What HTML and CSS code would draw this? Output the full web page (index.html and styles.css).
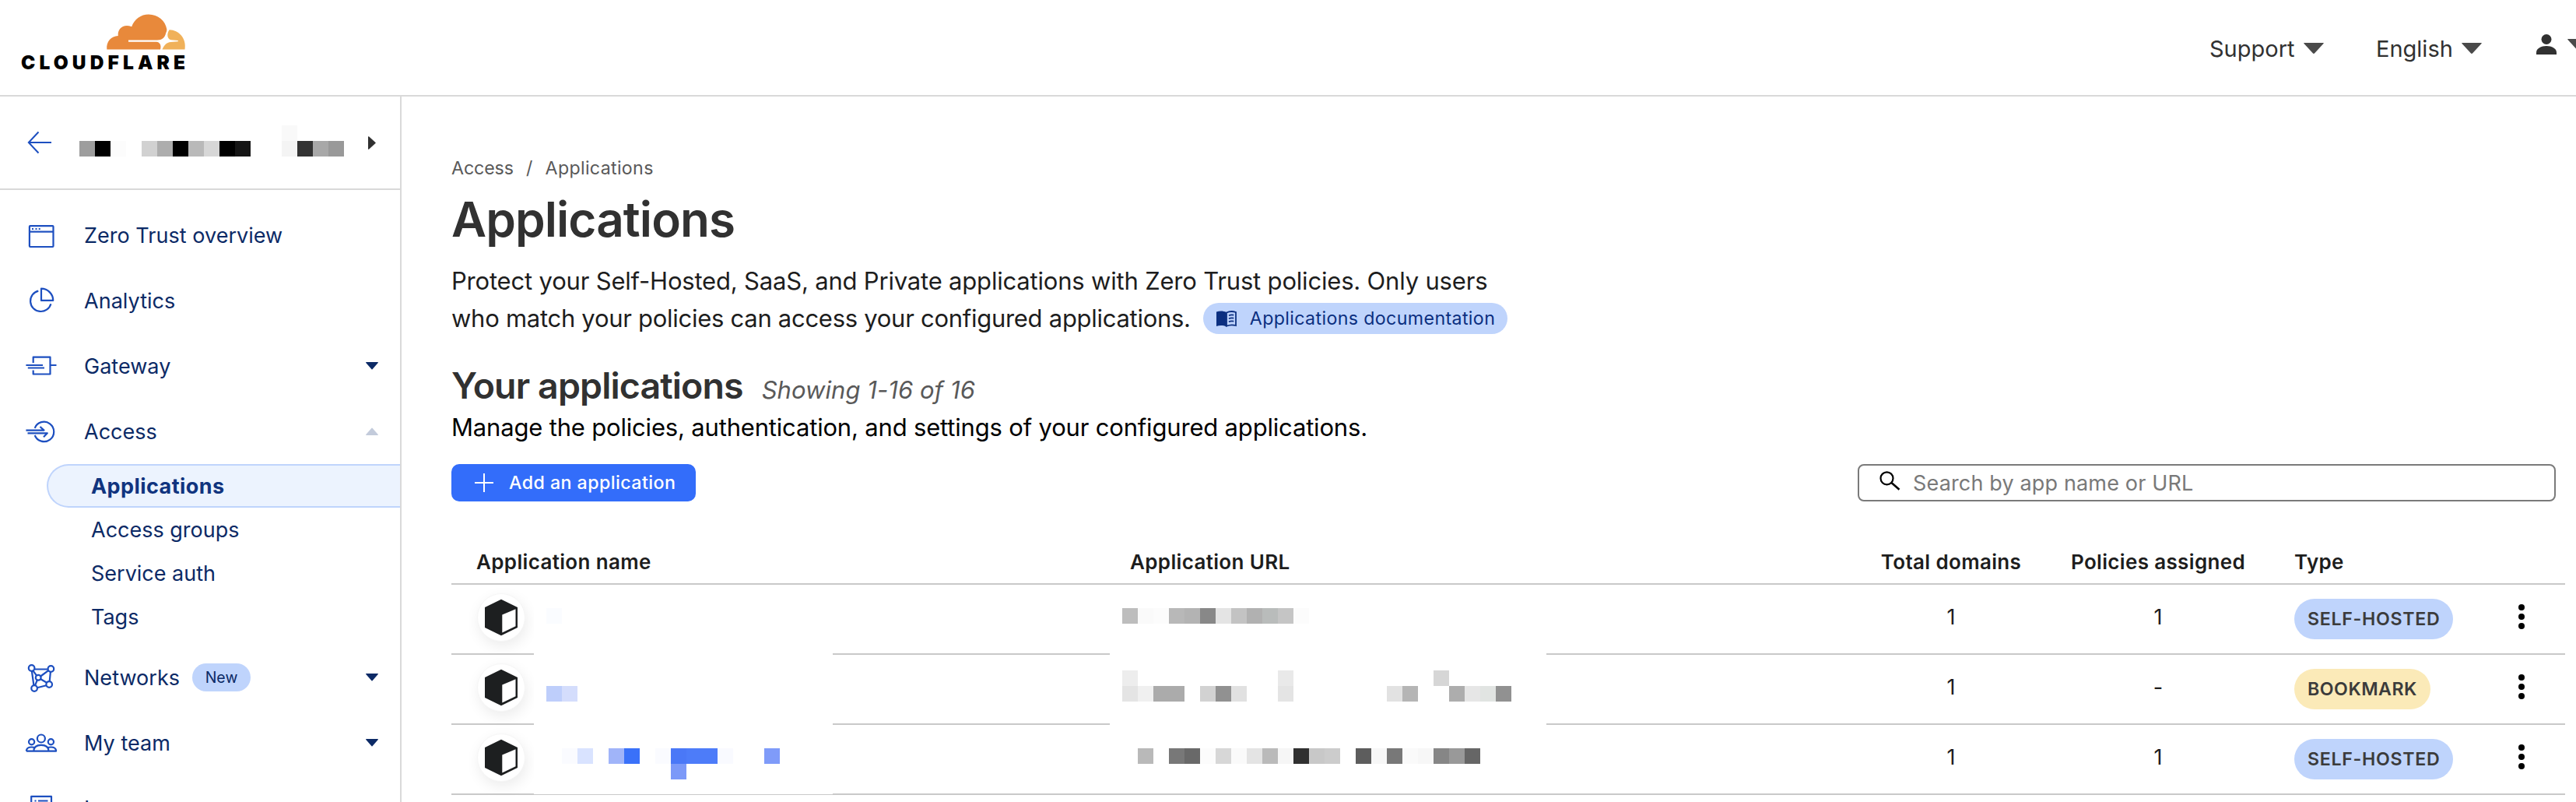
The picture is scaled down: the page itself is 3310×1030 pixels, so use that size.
FILE: index.html
```html
<!DOCTYPE html>
<html lang="en">
<head>
<meta charset="utf-8">
<title>Applications | Zero Trust</title>
<link rel="stylesheet" href="styles.css">
</head>
<body>
<header class="topbar">
  <div class="logo">
    <svg class="logo-cloud" width="104" height="46" viewBox="136 17.5 104 46">
      <path fill="#e8893b" d="M137.3 63C136.3 53 143 46 151.8 45.6C150.6 36 159 29.600 169.200 33.800C172.600 24 181 18 191 18C203 18 212.700 26.500 214.300 37C214.600 39 213.500 41 213 42.500C212 47.500 208 51 202 51H165V53.200H201C205 53.500 207.700 57 206 63Z"/>
      <path fill="#f0b15a" d="M217.600 37.700C229.500 38 240 48.500 237.500 63H208.500C210.500 58 214 53.800 219.500 53.500L228.800 52.800V51.600L220 50.800C214.500 49.500 214 43 217.600 37.700Z"/>
    </svg>
    <span class="logo-word">CLOUDFLARE</span>
  </div>
  <nav class="topnav">
    <a class="topnav-item">Support<svg class="drop" width="26" height="14" viewBox="0 0 26 14"><path d="M1 0H25Q26.500 0 25.500 1L14.200 13.300Q13 14.500 11.800 13.300L.5 1Q-.5 0 1 0Z"/></svg></a>
    <a class="topnav-item topnav-lang">English<svg class="drop" width="26" height="14" viewBox="0 0 26 14"><path d="M1 0H25Q26.500 0 25.500 1L14.200 13.300Q13 14.500 11.800 13.300L.5 1Q-.5 0 1 0Z"/></svg></a>
    <a class="topnav-user"><svg width="26" height="26" viewBox="0 0 26 26"><circle cx="13" cy="6.500" r="6.500"/><path d="M0 26V23.500C0 18 6.500 15 13 15S26 18 26 23.500V26Z"/></svg><svg class="drop" width="26" height="14" viewBox="0 0 26 14"><path d="M1 0H25Q26.500 0 25.500 1L14.200 13.300Q13 14.500 11.800 13.300L.5 1Q-.5 0 1 0Z"/></svg></a>
  </nav>
</header>
<div class="layout">
  <aside class="sidebar">
    <div class="account">
      <svg class="back" width="32" height="30" viewBox="0 0 32 30"><path d="M31 15H2M14.500 1.500L1.800 15L14.500 28.500"/></svg>
      <svg class="account-name" width="340" height="40" viewBox="0 0 340 40" shape-rendering="crispEdges">
        <rect x="0" y="20" width="20" height="20" fill="#9d9d9d"/><rect x="20" y="20" width="20" height="20" fill="#000"/><rect x="40" y="20" width="20" height="20" fill="#fcfcfc"/>
        <rect x="80" y="20" width="20" height="20" fill="#d1d1d1"/><rect x="100" y="20" width="20" height="20" fill="#adadad"/><rect x="120" y="20" width="20" height="20" fill="#000"/><rect x="140" y="20" width="20" height="20" fill="#b9b9b9"/><rect x="160" y="20" width="20" height="20" fill="#d7d7d7"/><rect x="180" y="20" width="20" height="20" fill="#000"/><rect x="200" y="20" width="20" height="20" fill="#151515"/>
        <rect x="260" y="0" width="20" height="20" fill="#f9f9f9"/><rect x="260" y="20" width="20" height="20" fill="#f4f4f4"/><rect x="280" y="20" width="20" height="20" fill="#333"/><rect x="300" y="20" width="20" height="20" fill="#a8a8a8"/><rect x="320" y="20" width="20" height="20" fill="#999"/>
      </svg>
      <svg class="account-caret" width="10" height="17" viewBox="0 0 10 17"><path d="M0 .5Q0 0 1 .2L9.500 8Q10 8.500 9.500 9L1 16.800Q0 17 0 16.500Z"/></svg>
    </div>
    <nav class="menu">
      <a class="item"><svg class="icon" width="42" height="40" viewBox="0 0 42 40"><rect x="5.900" y="8.100" width="30.600" height="26.900" rx="1"/><path d="M6 15.600H36"/><path class="dots" d="M9 12h2M13.500 12h2M17.700 12h2"/></svg><span>Zero Trust overview</span></a>
      <a class="item"><svg class="icon" width="42" height="40" viewBox="0 0 42 40"><path d="M21 4.700A15.200 15.200 0 0 1 36.200 19.900H21ZM17.300 7.600A13.400 13.400 0 1 0 33.400 24.200"/></svg><span>Analytics</span></a>
      <a class="item"><svg class="icon" width="42" height="40" viewBox="0 0 42 40"><path d="M10.700 16V8.700H32.500V30.500H10.700V25.500M1.400 19H23M3.800 22.500H25M33 19H40.500"/></svg><span>Gateway</span><svg class="caret" width="16" height="10" viewBox="0 0 16 10"><path d="M.5 0H15.500Q16.300.3 15.500 1.200L8.500 9.300Q8 9.800 7.500 9.300L.5 1.200Q-.3.300.5 0Z"/></svg></a>
      <a class="item"><svg class="icon" width="42" height="40" viewBox="0 0 42 40"><path d="M12.700 15.800A12.700 12.700 0 1 1 12.700 25M1.400 18.600H24.500L19.500 14M3.500 22.300H28.800L24 27.300"/></svg><span>Access</span><svg class="caret caret-open" width="16" height="10" viewBox="0 0 16 10"><path d="M.5 0H15.500Q16.300.3 15.500 1.200L8.500 9.300Q8 9.800 7.500 9.300L.5 1.200Q-.3.300.5 0Z"/></svg></a>
      <div class="submenu">
        <a class="sub sub-active">Applications</a>
        <a class="sub">Access groups</a>
        <a class="sub">Service auth</a>
        <a class="sub">Tags</a>
      </div>
      <a class="item"><svg class="icon" width="42" height="40" viewBox="0 0 42 40"><path d="M12.700 9.500H29.200M32.900 13L31.700 25M27.600 30.200L15.800 33.200M8.900 12L11.400 30.200M10.500 11.400L15 17.600M20.200 18.500L30.200 11.200M20 22L28.500 27M15.800 23.500L13 30.300"/><circle cx="8.600" cy="8" r="3.800"/><circle cx="33.400" cy="9" r="3.800"/><circle cx="31.200" cy="29" r="3.800"/><circle cx="12.100" cy="34" r="3.800"/><circle cx="17.200" cy="20.300" r="3.400"/></svg><span>Networks</span><span class="new">New</span><svg class="caret" width="16" height="10" viewBox="0 0 16 10"><path d="M.5 0H15.500Q16.300.3 15.500 1.200L8.500 9.300Q8 9.800 7.500 9.300L.5 1.200Q-.3.300.5 0Z"/></svg></a>
      <a class="item"><svg class="icon" width="42" height="40" viewBox="0 0 42 40"><circle cx="20.900" cy="14.500" r="5"/><circle cx="8.600" cy="18.700" r="3.600"/><circle cx="33.400" cy="18.700" r="3.600"/><path d="M2 30.700H40V29.500C39.500 27 36.500 25.500 33.500 25.500C31.500 25.500 30 25.900 28.800 26.500M2 30.700V29.500C2.500 27 5.500 25.500 8.500 25.500C10.500 25.500 12 25.900 13.200 26.500M11.400 30.500C11.400 25.500 15 22.800 20.900 22.800S30.400 25.500 30.400 30.500"/></svg><span>My team</span><svg class="caret" width="16" height="10" viewBox="0 0 16 10"><path d="M.5 0H15.500Q16.300.3 15.500 1.200L8.500 9.300Q8 9.800 7.500 9.300L.5 1.200Q-.3.300.5 0Z"/></svg></a>
      <a class="item"><svg class="icon" width="42" height="40" viewBox="0 0 42 40"><path d="M8.200 36V4.800H34V36ZM17 10.500H29.500M17 17H29.500M12.500 10.500H14.500M12.500 17H14.500"/></svg><span>Logs</span></a>
    </nav>
  </aside>
  <main class="main">
    <div class="crumbs"><span class="crumb-first">Access</span><span class="slash">/</span><span class="crumb-last">Applications</span></div>
    <h1>Applications</h1>
    <p class="intro"><span class="line-one">Protect your Self-Hosted, SaaS, and Private applications with Zero Trust policies. Only users</span><span class="line-two"><span class="line-text">who match your policies can access your configured applications.</span><a class="doc"><svg width="26" height="21" viewBox="0 0 26 21"><path fill="#0b2f80" d="M0 1.500C4 0 9 0 12.700 2V20.500C9 18.600 4 18.600 0 20Z"/><path fill="none" stroke="#0b2f80" stroke-width="1.800" d="M13 2.500C17 .6 21 .6 25 2V19C21 18 17 18 13 19.800ZM16 6.200C18 5.200 20 5.200 22.300 5.600M16 10.200C18 9.200 20 9.200 22.300 9.600M16 14.200C18 13.200 20 13.200 22.300 13.600"/></svg>Applications documentation</a></span></p>
    <div class="heading"><h2>Your applications</h2><em>Showing 1-16 of 16</em></div>
    <p class="sub-intro">Manage the policies, authentication, and settings of your configured applications.</p>
    <div class="toolbar">
      <button class="add"><svg width="24" height="24" viewBox="0 0 24 24"><path stroke="#fff" stroke-width="2" d="M12 0V24M0 12H24"/></svg>Add an application</button>
      <div class="search"><svg width="27" height="25" viewBox="0 0 27 25"><circle cx="9.500" cy="9.300" r="8" fill="none" stroke="#000" stroke-width="2.200"/><path stroke="#000" stroke-width="2.600" d="M15.200 14.800L25.500 23.800"/></svg><span>Search by app name or URL</span></div>
    </div>
    <section class="table">
      <div class="row head"><span class="c-name">Application name</span><span>Application URL</span><span class="mid">Total domains</span><span class="mid">Policies assigned</span><span class="c-type">Type</span><span></span></div>
      <div class="row"><span class="c-name"><span class="avatar"><svg width="44" height="48" viewBox="0 0 44 48"><path fill="#1d1f20" d="M22 .8L43 11V37L22 47.200L1 37V11Z"/><path fill="#fff" d="M23.300 20.500L40.500 13.200V35.300L23.300 43.500Z"/></svg></span></span><span></span><span class="mid">1</span><span class="mid">1</span><span class="c-type"><b class="tag">SELF-HOSTED</b></span><span class="mid more"><i></i><i></i><i></i></span></div>
      <div class="row"><span class="c-name"><span class="avatar"><svg width="44" height="48" viewBox="0 0 44 48"><path fill="#1d1f20" d="M22 .8L43 11V37L22 47.200L1 37V11Z"/><path fill="#fff" d="M23.300 20.500L40.500 13.200V35.300L23.300 43.500Z"/></svg></span></span><span></span><span class="mid">1</span><span class="mid">-</span><span class="c-type"><b class="tag tag-bookmark">BOOKMARK</b></span><span class="mid more"><i></i><i></i><i></i></span></div>
      <div class="row"><span class="c-name"><span class="avatar"><svg width="44" height="48" viewBox="0 0 44 48"><path fill="#1d1f20" d="M22 .8L43 11V37L22 47.200L1 37V11Z"/><path fill="#fff" d="M23.300 20.500L40.500 13.200V35.300L23.300 43.500Z"/></svg></span></span><span></span><span class="mid">1</span><span class="mid">1</span><span class="c-type"><b class="tag">SELF-HOSTED</b></span><span class="mid more"><i></i><i></i><i></i></span></div>
      <svg class="mask mask-name" width="384" height="268" viewBox="686 752 384 268" shape-rendering="crispEdges">
        <rect x="686" y="752" width="384" height="268" fill="#fff"/>
        <rect x="702" y="781" width="20" height="20" fill="#fafcff"/>
        <rect x="702" y="881" width="20" height="20" fill="#becefb"/><rect x="722" y="881" width="20" height="20" fill="#d4ddfc"/>
        <rect x="722" y="961" width="20" height="20" fill="#fafbff"/><rect x="742" y="961" width="20" height="20" fill="#d9e3ff"/><rect x="782" y="961" width="20" height="20" fill="#a0b4f9"/><rect x="802" y="961" width="20" height="20" fill="#3a71f9"/><rect x="842" y="961" width="20" height="20" fill="#fafbff"/><rect x="862" y="961" width="20" height="20" fill="#4a78f7"/><rect x="882" y="961" width="40" height="20" fill="#4d7cf9"/><rect x="922" y="961" width="20" height="20" fill="#f9faff"/><rect x="982" y="961" width="20" height="20" fill="#7f9bf9"/>
        <rect x="862" y="981" width="20" height="20" fill="#7c99f8"/>
      </svg>
      <svg class="mask mask-url" width="561" height="267" viewBox="1426 752 561 267" shape-rendering="crispEdges">
        <rect x="1426" y="752" width="561" height="267" fill="#fff"/>
        <rect x="1442" y="781" width="20" height="20" fill="#bdbdbd"/><rect x="1462" y="781" width="20" height="20" fill="#fafafa"/><rect x="1482" y="781" width="20" height="20" fill="#fcfcfc"/><rect x="1502" y="781" width="20" height="20" fill="#b8b8b8"/><rect x="1522" y="781" width="20" height="20" fill="#b3b3b3"/><rect x="1542" y="781" width="20" height="20" fill="#888"/><rect x="1562" y="781" width="20" height="20" fill="#e4e4e4"/><rect x="1582" y="781" width="20" height="20" fill="#c3c3c3"/><rect x="1602" y="781" width="20" height="20" fill="#b1b1b1"/><rect x="1622" y="781" width="20" height="20" fill="#b9bcbb"/><rect x="1642" y="781" width="20" height="20" fill="#c5c5c5"/><rect x="1662" y="781" width="20" height="20" fill="#fcfcfc"/>
        <rect x="1442" y="861" width="20" height="20" fill="#ededed"/><rect x="1642" y="861" width="20" height="20" fill="#e9e9e9"/><rect x="1842" y="861" width="20" height="20" fill="#d6d6d6"/>
        <rect x="1442" y="881" width="20" height="20" fill="#e4e4e4"/><rect x="1462" y="881" width="20" height="20" fill="#f0f0f0"/><rect x="1482" y="881" width="40" height="20" fill="#ababab"/><rect x="1542" y="881" width="20" height="20" fill="#d2d2d2"/><rect x="1562" y="881" width="20" height="20" fill="#919191"/><rect x="1582" y="881" width="20" height="20" fill="#e1e1e1"/><rect x="1642" y="881" width="20" height="20" fill="#e4e4e4"/><rect x="1782" y="881" width="20" height="20" fill="#e2e2e2"/><rect x="1802" y="881" width="20" height="20" fill="#b5b5b5"/><rect x="1862" y="881" width="20" height="20" fill="#adadad"/><rect x="1882" y="881" width="20" height="20" fill="#e6e6e6"/><rect x="1902" y="881" width="20" height="20" fill="#e1e4e2"/><rect x="1922" y="881" width="20" height="20" fill="#919191"/>
        <rect x="1462" y="961" width="20" height="20" fill="#b9b9b9"/><rect x="1502" y="961" width="20" height="20" fill="#787878"/><rect x="1522" y="961" width="20" height="20" fill="#696969"/><rect x="1542" y="961" width="20" height="20" fill="#fcfcfc"/><rect x="1562" y="961" width="20" height="20" fill="#d7d7d7"/><rect x="1582" y="961" width="20" height="20" fill="#fafafa"/><rect x="1602" y="961" width="20" height="20" fill="#e4e4e4"/><rect x="1622" y="961" width="20" height="20" fill="#bababa"/><rect x="1642" y="961" width="20" height="20" fill="#f6f6f6"/><rect x="1662" y="961" width="20" height="20" fill="#303030"/><rect x="1682" y="961" width="20" height="20" fill="#c8c8c8"/><rect x="1702" y="961" width="20" height="20" fill="#ccc"/><rect x="1742" y="961" width="20" height="20" fill="#5d5d5d"/><rect x="1762" y="961" width="20" height="20" fill="#f7f7f7"/><rect x="1782" y="961" width="20" height="20" fill="#787878"/><rect x="1802" y="961" width="20" height="20" fill="#fafafa"/><rect x="1822" y="961" width="20" height="20" fill="#f7f7f7"/><rect x="1842" y="961" width="20" height="20" fill="#868686"/><rect x="1862" y="961" width="20" height="20" fill="#999"/><rect x="1882" y="961" width="20" height="20" fill="#666"/>
      </svg>
    </section>
  </main>
</div>
</body>
</html>
```
FILE: styles.css
```css
* { box-sizing: border-box; }
html, body { height: 100%; }
body {
  margin: 0;
  display: flex;
  flex-direction: column;
  overflow: hidden;
  background: #fff;
  color: #1d1d1d;
  font-family: Inter, "Liberation Sans", sans-serif;
  font-size: 27px;
}
svg { display: block; flex: none; }
p, h1, h2 { margin: 0; }

/* Top bar */
.topbar {
  flex: none;
  height: 124px;
  display: flex;
  justify-content: space-between;
  border-bottom: 2px solid #d9d9d9;
}
.logo {
  width: 212px;
  margin-left: 27px;
  padding-top: 17.5px;
  display: flex;
  flex-direction: column;
}
.logo-cloud { align-self: flex-end; margin-right: -1px; }
.logo-word {
  margin-top: 1px;
  color: #000;
  font-weight: 900;
  font-size: 24.5px;
  line-height: 31px;
  letter-spacing: 5.13px;
}
.topnav {
  width: 471px;
  height: 124px;
  display: flex;
  overflow: hidden;
  color: #313131;
  font-size: 29px;
  line-height: 125px;
}
.topnav-item { width: 214px; flex: none; display: flex; align-items: center; }
.topnav-lang { width: 206px; }
.topnav-user { flex: none; display: flex; align-items: center; gap: 14px; padding-bottom: 10px; fill: #313131; }
.drop { fill: #4a4a4a; margin-left: 11px; }
.topnav-user .drop { margin-left: 0; }

/* Sidebar */
.layout { flex: 1; min-height: 0; display: flex; }
.sidebar { flex: none; width: 516px; border-right: 2px solid #d9d9d9; overflow: hidden; }
.account {
  height: 120px;
  display: flex;
  align-items: center;
  padding: 0 31px 0 35px;
  border-bottom: 2px solid #d9d9d9;
}
.back { fill: none; stroke: #1d4fc0; stroke-width: 2; }
.account-name { margin: 0 31px 4px 35px; }
.account-caret { fill: #303030; }
.menu { padding-top: 16px; color: #0c2a66; }
.item { height: 84px; display: flex; align-items: center; padding: 0 28px 0 32px; }
.item > span:not(.new) { margin-left: 34px; letter-spacing: .03px; }
.icon { fill: none; stroke: #1d4fc0; stroke-width: 2.2; stroke-linejoin: round; }
.caret { margin-left: auto; fill: #0c2a66; }
.caret-open { transform: rotate(180deg); fill: #c3cbdb; }
.new {
  margin-left: 16px;
  width: 75px;
  height: 36px;
  border-radius: 18px;
  background: #bfd4fc;
  font-size: 19.5px;
  line-height: 36px;
  text-align: center;
}
.submenu { margin-bottom: 8px; padding-left: 60px; }
.sub { display: block; height: 56px; padding-left: 57px; line-height: 58px; }
.sub-active {
  padding-left: 55px;
  border: 2px solid #bfd4fc;
  border-right: 0;
  border-radius: 28px 0 0 28px;
  background: #ecf3fe;
  color: #10347f;
  font-weight: 700;
  letter-spacing: .43px;
  line-height: 54px;
}

/* Content */
.main { flex: 1; min-width: 0; padding: 76px 14px 0 64px; }
.crumbs { display: flex; font-size: 23.2px; line-height: 32px; color: #595959; letter-spacing: .33px; }
.crumb-first { letter-spacing: -.1px; }
.slash { margin: 0 16px; }
h1 {
  margin-top: 10px;
  font-size: 62px;
  font-weight: 600;
  line-height: 79px;
  letter-spacing: -.915px;
  color: #313131;
}
.intro { margin-top: 16px; font-size: 31px; line-height: 48px; letter-spacing: -.19px; }
.line-one { display: block; white-space: nowrap; }
.line-two { display: flex; align-items: center; height: 48px; }
.line-text { letter-spacing: -.28px; }
.doc {
  display: flex;
  align-items: center;
  gap: 17px;
  height: 40px;
  margin-left: 16px;
  padding: 0 16px 0 17px;
  border-radius: 20px;
  background: #bfd4fc;
  color: #0b2f80;
  font-size: 23.2px;
  letter-spacing: .37px;
}
.heading { display: flex; align-items: baseline; gap: 24px; height: 60px; margin-top: 32px; line-height: 60px; }
h2 { font-size: 46.5px; font-weight: 600; letter-spacing: -.888px; color: #313131; }
.heading em { font-size: 31px; line-height: 1; color: #595959; letter-spacing: .05px; }
.sub-intro { font-size: 31px; line-height: 48px; letter-spacing: -.18px; color: #000; }
.toolbar { display: flex; justify-content: space-between; margin-top: 23px; padding-right: 12px; }
.add {
  display: flex;
  align-items: center;
  gap: 20px;
  width: 314px;
  height: 48px;
  padding: 0 0 0 30px;
  border: 0;
  border-radius: 10px;
  background: #336dfa;
  color: #fff;
  font: 500 23.2px Inter, "Liberation Sans", sans-serif;
  letter-spacing: .445px;
}
.search {
  display: flex;
  align-items: center;
  gap: 16px;
  width: 897px;
  height: 48px;
  padding-left: 26px;
  border: 2px solid #7a7a7a;
  border-radius: 8px;
  color: #797979;
  letter-spacing: .154px;
}
.search svg { margin-bottom: 5px; }

/* Applications table */
.table { position: relative; margin-top: 50px; }
.row {
  display: grid;
  grid-template-columns: 872px 936px 238px 294px 264px 112px;
  align-items: center;
  height: 90px;
  border-bottom: 2px solid #c9c9c9;
}
.head { height: 57px; font-size: 26px; font-weight: 600; letter-spacing: .34px; }
.c-name { padding-left: 33px; }
.c-type { padding-left: 28px; }
.head .c-name { padding-left: 32px; }
.mid { text-align: center; padding-bottom: 6px; }
.head .mid { padding-bottom: 0; }
.row:not(.head) .c-name { padding-bottom: 5px; }
.avatar {
  display: flex;
  align-items: center;
  justify-content: center;
  width: 62px;
  height: 62px;
  border: 1px solid #f6f6f6;
  border-radius: 50%;
  background: #fff;
  box-shadow: 2px 6px 18px rgba(0, 0, 0, .08);
}
.tag {
  display: inline-block;
  height: 52px;
  padding: 0 17px;
  border-radius: 26px;
  background: #bfd4fc;
  color: #3b3b3b;
  font-size: 23.2px;
  font-weight: 600;
  line-height: 52px;
  letter-spacing: .681px;
  vertical-align: top;
}
.tag-bookmark { background: #fbeab8; letter-spacing: .484px; }
.more { display: flex; flex-direction: column; align-items: center; gap: 4.4px; }
.more i { width: 8px; height: 8px; border-radius: 50%; background: #000; }

/* Redacted names and addresses lie over the rows */
.mask { position: absolute; top: 58px; }
.mask-name { left: 106px; }
.mask-url { left: 846px; }
```
